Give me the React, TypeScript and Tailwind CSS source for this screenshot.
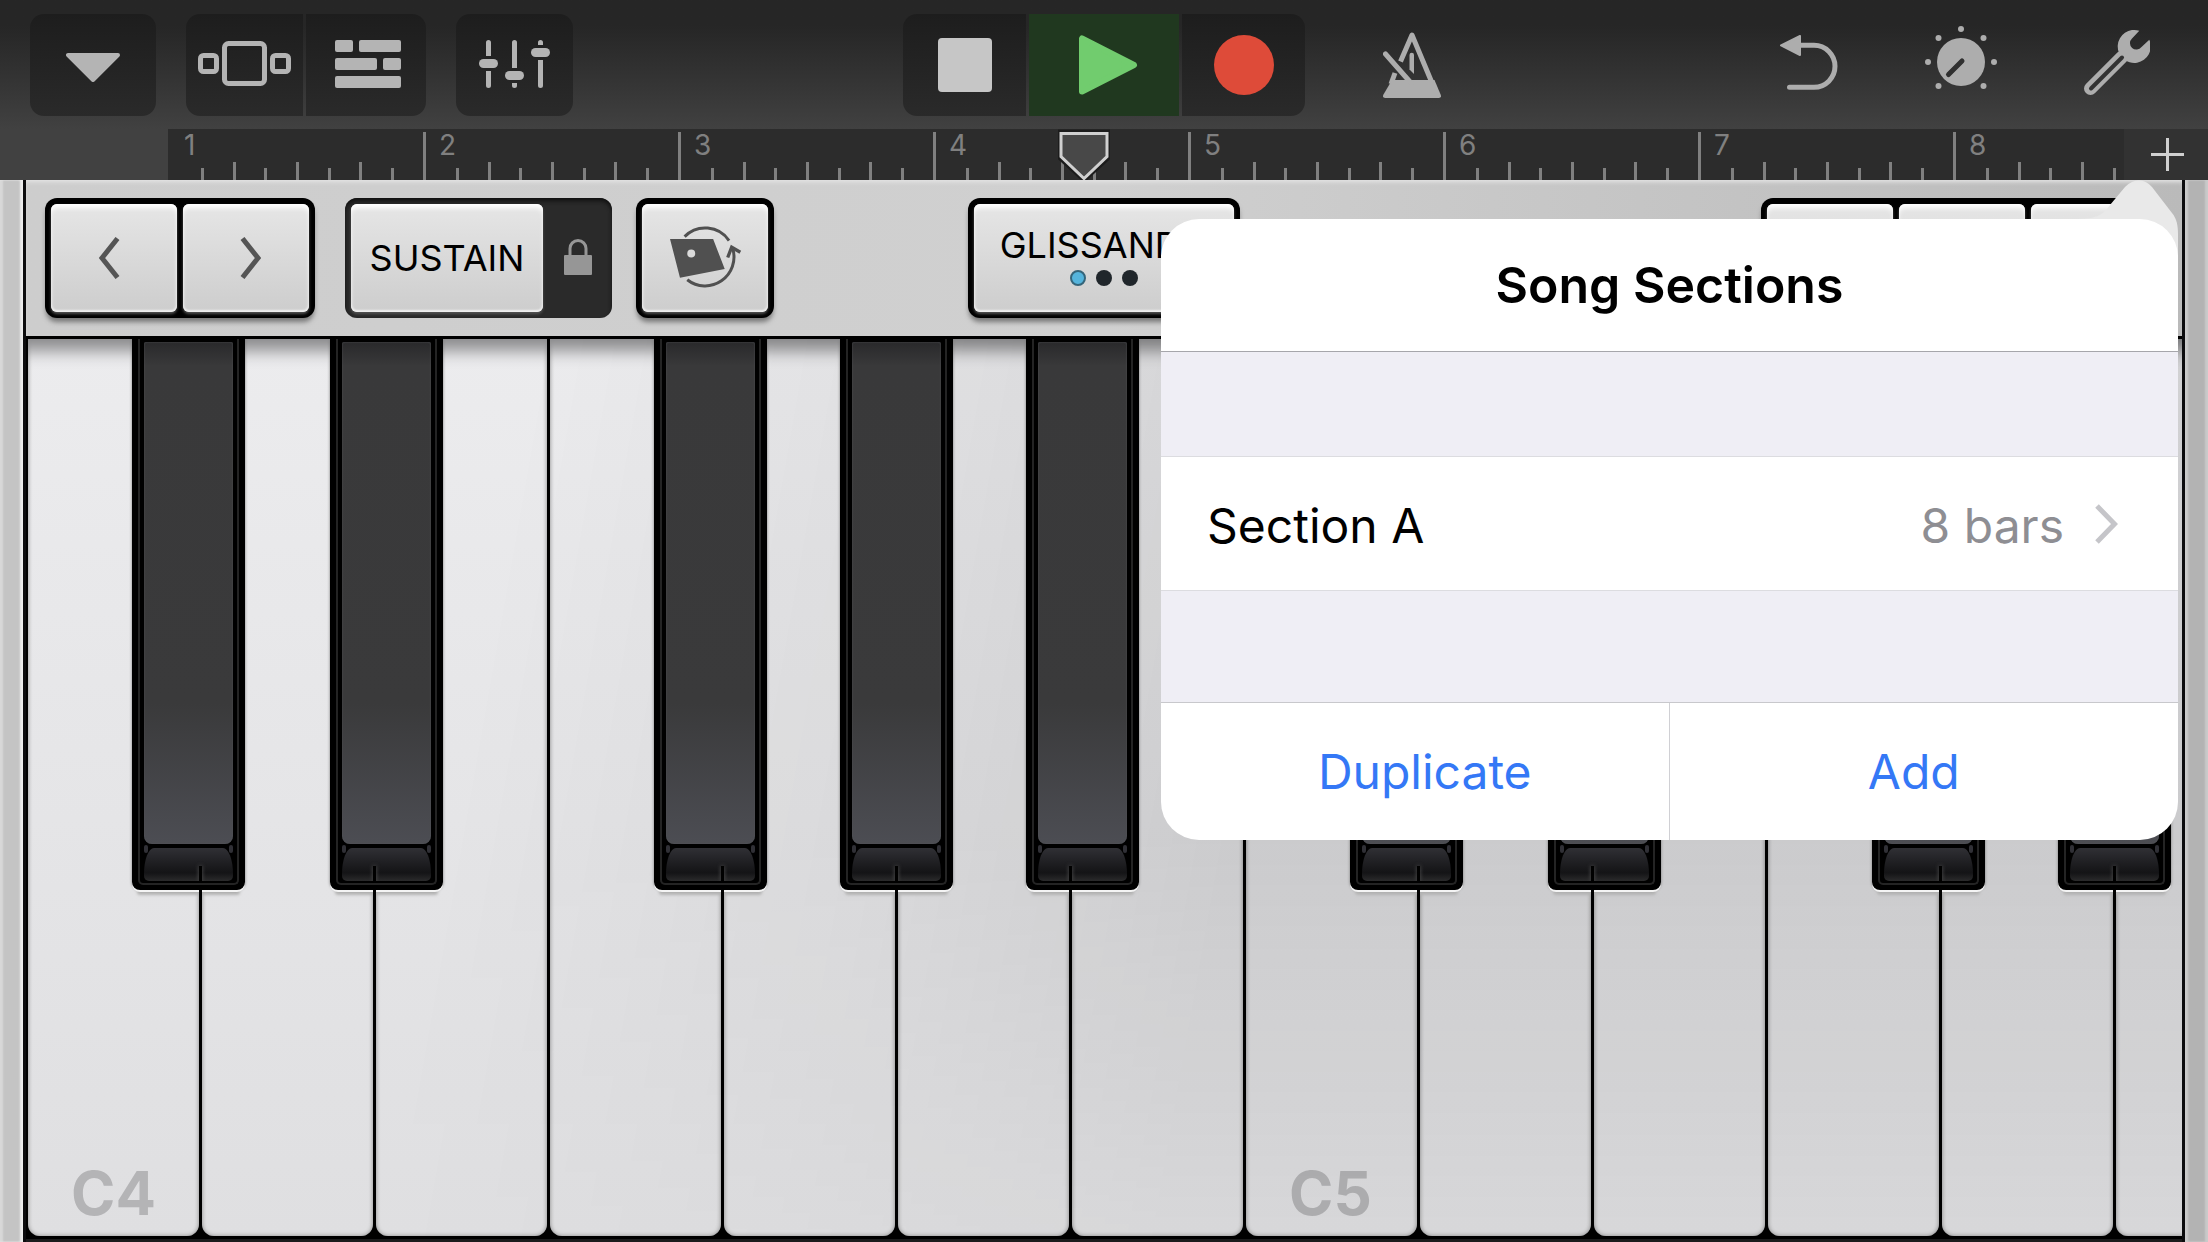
import React from 'react';

type SharpPlace = 'near' | 'mid' | 'far';

interface PianoKey {
  note: string;
  label?: string;
  sharp?: SharpPlace;
}

// One entry per white key; "sharp" says how far the black key hangs over its right edge
const KEYS: PianoKey[] = [
  { note: 'C4', label: 'C4', sharp: 'near' },
  { note: 'D4', sharp: 'far' },
  { note: 'E4' },
  { note: 'F4', sharp: 'near' },
  { note: 'G4', sharp: 'mid' },
  { note: 'A4', sharp: 'far' },
  { note: 'B4' },
  { note: 'C5', label: 'C5', sharp: 'near' },
  { note: 'D5', sharp: 'far' },
  { note: 'E5' },
  { note: 'F5', sharp: 'near' },
  { note: 'G5', sharp: 'mid' },
  { note: 'A5' },
];

const SHARP_LEFT = {
  near: 'left-[104px]',
  mid: 'left-[116px]',
  far: 'left-[128px]',
};

const SEAM_LEFT = {
  near: 'left-[67px]',
  mid: 'left-[55px]',
  far: 'left-[43px]',
};

const BARS = [1, 2, 3, 4, 5, 6, 7, 8];
const TICKS = [12, 18, 12, 18, 12, 18, 12];

const TOOL = 'flex h-[102px] items-center justify-center bg-gradient-to-b from-[#1d1d1d] to-[#2a2a2a]';
const CAP =
  'flex h-[108px] items-center justify-center rounded-[6px] bg-gradient-to-b from-[#e6e6e6] to-[#cdcdcd] shadow-[inset_0_5px_5px_-1px_#ffffff,inset_0_-2px_2px_#f0f0f0,0_2px_3px_#555555]';
const FRAME = 'flex rounded-[12px] bg-black p-[6px] gap-[6px] shadow-[0_5px_5px_-1px_#777777]';

const TracksIcon = () => (
  <svg width="93" height="45" viewBox="0 0 93 45" fill="none" stroke="#b4b4b4" strokeWidth="5">
    <rect x="26.5" y="2.5" width="40" height="40" rx="4" />
    <rect x="2.5" y="14.5" width="16" height="16" rx="3" />
    <rect x="74.5" y="14.5" width="16" height="16" rx="3" />
  </svg>
);

const BricksIcon = () => (
  <svg width="66" height="48" viewBox="0 0 66 48" fill="#b4b4b4">
    <rect width="18" height="12" rx="2" />
    <rect x="24" width="42" height="12" rx="2" />
    <rect y="18" width="42" height="12" rx="2" />
    <rect x="48" y="18" width="18" height="12" rx="2" />
    <rect y="36" width="66" height="12" rx="2" />
  </svg>
);

const MixerIcon = () => (
  <svg width="71" height="48" viewBox="0 0 71 48" fill="#b4b4b4">
    <path d="M7 2.5a2.5 2.5 0 0 1 5 0V16H7zM7 31h5v14.5a2.5 2.5 0 0 1-5 0z" />
    <rect y="19" width="19" height="9" rx="4.5" />
    <path d="M33 2.5a2.5 2.5 0 0 1 5 0V28h-5zM33 43h5v2.5a2.5 2.5 0 0 1-5 0z" />
    <rect x="26" y="31" width="19" height="9" rx="4.5" />
    <path d="M59 2.5a2.5 2.5 0 0 1 5 0V5h-5zM59 20h5v25.5a2.5 2.5 0 0 1-5 0z" />
    <rect x="52" y="8" width="19" height="9" rx="4.5" />
  </svg>
);

const MetronomeIcon = () => (
  <svg width="58" height="66" viewBox="0 0 58 66" fill="none" stroke="#adadad" strokeWidth="5">
    <path d="M17.5 29.5L29 3l23 55" strokeLinejoin="round" />
    <path d="M12 41l-4 11" />
    <path d="M9 48h42.5l6.3 15q.8 3-2 3H2.2q-2.8 0-2-3z" fill="#adadad" stroke="none" />
    <path d="M2.5 22L28 51" strokeLinecap="round" />
    <path d="M26.5 23a2.2 2.2 0 0 1 4.5 0V42l-4.5-4.5z" fill="#adadad" stroke="none" />
  </svg>
);

const UndoIcon = () => (
  <svg width="58" height="55" viewBox="0 0 58 55" fill="none" stroke="#adadad" strokeWidth="5">
    <path d="M20 10.3H34a21 21 0 0 1 0 42H9.5" strokeLinecap="round" />
    <path d="M1 10.3L20 1V20z" fill="#adadad" strokeWidth="2" strokeLinejoin="round" />
  </svg>
);

const KnobIcon = () => (
  <svg width="72" height="72" viewBox="0 0 72 72" fill="#adadad">
    <circle cx="36" cy="36" r="24" />
    <circle cx="3" cy="36" r="3" />
    <circle cx="69" cy="36" r="3" />
    <circle cx="36" cy="3" r="3" />
    <circle cx="13.5" cy="12" r="3" />
    <circle cx="58.5" cy="12" r="3" />
    <circle cx="13.5" cy="60" r="3" />
    <circle cx="58.5" cy="60" r="3" />
    <path d="M37 35L23.5 48.5" stroke="#303030" strokeWidth="5" strokeLinecap="round" />
  </svg>
);

const WrenchIcon = () => (
  <svg width="66" height="66" viewBox="0 0 66 66">
    <path d="M38 28L6.5 59.5" stroke="#adadad" strokeWidth="13" strokeLinecap="round" />
    <path d="M55.3 1.7A16.5 16.5 0 1 0 65.3 10.7L57.5 18A6.4 6.4 0 1 1 48 9.5z" fill="#adadad" />
    <path d="M38 28.5L7 59.5" stroke="#333333" strokeWidth="4" strokeLinecap="round" />
  </svg>
);

const RotateIcon = () => (
  <svg width="73" height="63" viewBox="90 105 220 190" fill="none" stroke="#505050" strokeWidth="9">
    <path d="M137 140A87 87 0 0 1 271 152" />
    <path d="M145 270A87 87 0 0 0 282 176" />
    <path d="M267 203L279 172L305 187" strokeWidth="10" />
    <path
      d="M93 147H223L258 238L123 264zM169 191a12 12 0 1 0-24 0a12 12 0 1 0 24 0"
      fill="#505050"
      fillRule="evenodd"
      stroke="none"
    />
  </svg>
);

const LockIcon = () => (
  <svg width="28" height="38" viewBox="0 0 28 38">
    <path d="M6 20V11.5a8 8 0 0 1 16 0V20" fill="none" stroke="#969696" strokeWidth="3" />
    <rect y="18" width="28" height="20" rx="1" fill="#969696" />
  </svg>
);

const Toolbar: React.FC = () => (
  <header className="grid h-[129px] grid-cols-[1fr_auto_1fr] bg-gradient-to-b from-[#262626] from-20% to-[#414141] pt-[14px]">
    <div className="flex gap-[30px] pl-[30px]">
      <button aria-label="Instruments" className={`${TOOL} w-[126px] rounded-[14px] pt-1`}>
        <svg width="54" height="30" viewBox="0 0 54 30" fill="#b4b4b4" stroke="#b4b4b4" strokeWidth="4" strokeLinejoin="round">
          <path d="M2 3H52L27 28z" />
        </svg>
      </button>
      <div className="flex gap-[3px]">
        <button aria-label="Instrument view" className={`${TOOL} w-[117px] rounded-l-[14px] pb-1`}>
          <TracksIcon />
        </button>
        <button aria-label="Tracks view" className={`${TOOL} w-[120px] rounded-r-[14px] pb-[2px] pl-1`}>
          <BricksIcon />
        </button>
      </div>
      <button aria-label="Track controls" className={`${TOOL} w-[117px] rounded-[14px] pb-[2px]`}>
        <MixerIcon />
      </button>
    </div>

    <div className="flex gap-[3px]">
      <button aria-label="Stop" className={`${TOOL} w-[123px] rounded-l-[14px]`}>
        <span className="size-[54px] rounded-[4px] bg-[#c6c6c6]" />
      </button>
      <button aria-label="Play" className="flex h-[102px] w-[150px] items-center justify-center bg-[#20381f] pl-2">
        <svg width="60" height="60" viewBox="0 0 60 60" fill="#71cc6e" stroke="#71cc6e" strokeWidth="6" strokeLinejoin="round">
          <path d="M4 3.5V56.5L56 30z" />
        </svg>
      </button>
      <button aria-label="Record" className={`${TOOL} w-[123px] rounded-r-[14px]`}>
        <span className="size-[60px] rounded-full bg-[#de4b39]" />
      </button>
    </div>

    <div className="flex h-[102px] items-center pr-[58px] pl-[78px]">
      <button aria-label="Metronome">
        <MetronomeIcon />
      </button>
      <div className="mb-[6px] ml-auto flex items-center gap-[87px]">
        <button aria-label="Undo">
          <UndoIcon />
        </button>
        <button aria-label="Effects">
          <KnobIcon />
        </button>
        <button aria-label="Settings">
          <WrenchIcon />
        </button>
      </div>
    </div>
  </header>
);

const Ruler: React.FC = () => (
  <div className="flex h-[51px] bg-[#414141] pl-[168px]">
    <div className="relative flex flex-1 overflow-hidden bg-[#2c2c2c] pt-[3px]">
      {BARS.map((bar) => (
        <div
          key={bar}
          className={`flex w-[255px] shrink-0 flex-col justify-between border-l-[3px] ${bar === 1 ? 'border-transparent' : 'border-[#808080]'}`}
        >
          <span className="pl-[13px] text-[28px] leading-[26px] text-[#808080]">{bar}</span>
          <div className="flex items-end justify-between pr-[29px] pl-[30px]">
            {TICKS.map((h, i) => (
              <span key={i} className={`w-[3px] bg-[#808080] ${h === 18 ? 'h-[18px]' : 'h-[12px]'}`} />
            ))}
          </div>
        </div>
      ))}
      <svg className="absolute bottom-0 left-[890px]" width="52" height="51" viewBox="0 0 52 51">
        <path d="M2 3.5H50V28L26 50L2 28z" fill="#484848" stroke="#1c1c1c" strokeWidth="6" />
        <path d="M3 4.5H49V27.5L26 49.5L3 27.5z" fill="#484848" stroke="#d0d0d0" strokeWidth="3" />
      </svg>
    </div>
    <button aria-label="Add section" className="flex w-[84px] items-center justify-center bg-[#323232] pl-[2px]">
      <svg width="33" height="33" viewBox="0 0 33 33" stroke="#d0d0d0" strokeWidth="3">
        <path d="M16.5 0V33M0 16.5H33" />
      </svg>
    </button>
  </div>
);

const ControlStrip: React.FC = () => (
  <div className="grid h-[156px] grid-cols-[1fr_auto_1fr] bg-linear-to-r from-[#cdcdcd] via-[#d0d0d0] to-[#bababa] px-[19px] pt-[18px] shadow-[inset_0_4px_4px_-2px_#e4e4e4]">
    <div className="flex items-start">
      <div className={FRAME}>
        <button aria-label="Octave down" className={`${CAP} w-[126px] pr-[10px]`}>
          <svg width="22" height="42" viewBox="0 0 22 42" fill="none" stroke="#555555" strokeWidth="5">
            <path d="M19.5 1.5L4 21L19.5 40.5" />
          </svg>
        </button>
        <button aria-label="Octave up" className={`${CAP} w-[126px] pl-[10px]`}>
          <svg width="22" height="42" viewBox="0 0 22 42" fill="none" stroke="#555555" strokeWidth="5">
            <path d="M2.5 1.5L18 21L2.5 40.5" />
          </svg>
        </button>
      </div>
      <div className="ml-[30px] flex rounded-[12px] bg-[#2a2a2a] py-[6px] pl-[6px] shadow-[inset_0_3px_4px_#111111]">
        <button className={`${CAP} w-[192px] text-[36px] text-black`}>SUSTAIN</button>
        <button aria-label="Lock sustain" className="flex w-[69px] items-center justify-center pb-1">
          <LockIcon />
        </button>
      </div>
      <div className={`${FRAME} ml-[24px]`}>
        <button aria-label="Rotate keyboard" className={`${CAP} w-[126px] pb-1`}>
          <RotateIcon />
        </button>
      </div>
    </div>

    <div className="flex items-start">
      <div className={FRAME}>
        <button className={`${CAP} w-[260px] flex-col gap-[4px] from-[#dcdcdc] to-[#bababa] pb-[2px] text-[36px] leading-[42px] text-black`}>
          GLISSANDO
          <span className="flex gap-[10px] pb-1">
            <span className="size-4 rounded-full border-2 border-[#35657a] bg-[#55b4dc]" />
            <span className="size-4 rounded-full bg-[#20262b]" />
            <span className="size-4 rounded-full bg-[#20262b]" />
          </span>
        </button>
      </div>
    </div>

    <div className="flex items-start justify-end">
      <div className={FRAME}>
        <button aria-label="Keyboard layout" className={`${CAP} w-[126px]`} />
        <button aria-label="Scale" className={`${CAP} w-[126px]`} />
        <button aria-label="Arpeggiator" className={`${CAP} w-[126px]`} />
      </div>
    </div>
  </div>
);

const BlackKey: React.FC<{ place: SharpPlace; note: string }> = ({ place, note }) => (
  <button
    aria-label={`${note} sharp`}
    className={`absolute top-0 z-10 h-[551px] w-[113px] rounded-b-[8px] bg-black px-[6px] pb-[5px] shadow-[0_2px_0_#f4f4f4,0_0_3px_#777777,0_10px_3px_-5px_#b4b4b4] ${SHARP_LEFT[place]}`}
  >
    <span className="flex h-full flex-col gap-[4px] rounded-b-[5px] border-x-2 border-b-2 border-[#242424] bg-black px-[4px] pt-[3px] pb-[2px]">
      <span className="flex-1 rounded-t-[2px] rounded-b-[8px] bg-[linear-gradient(#29292b,#39393a_24px,#3a3a3b_72%,#4c4d53)] shadow-[inset_0_0_2px_#55565a]" />
      <span className="relative h-[33px]">
        <span className="absolute -top-[3px] left-0 h-[8px] w-[4px] rounded-full bg-[#303036]" />
        <span className="absolute -top-[3px] right-0 h-[8px] w-[4px] rounded-full bg-[#303036]" />
        <span className="relative block h-full overflow-hidden bg-linear-to-b from-[#303035] via-[#141416] via-75% to-[#2b2b2c] [border-radius:10px_10px_5px_5px/26px_26px_5px_5px]">
          <span className={`absolute bottom-0 -ml-[12px] h-[15px] w-[3px] bg-black shadow-[0_0_4px_#5a5a5a] ${SEAM_LEFT[place]}`} />
        </span>
      </span>
    </span>
    {/* keeps the gap between the white keys open below the black one */}
    <span className={`absolute top-full h-4 w-[3px] bg-black ${SEAM_LEFT[place]}`} />
  </button>
);

const Keyboard: React.FC = () => (
  <div className="relative flex flex-1 gap-[3px] overflow-hidden border-t-[3px] border-b-[3px] border-t-black border-b-[#1b1b1c] bg-black pb-[3px] pl-[2px]">
    {KEYS.map((key) => (
      <div key={key.note} className="relative flex w-[171px] shrink-0">
        <button
          aria-label={key.note}
          className="flex flex-1 items-end justify-start rounded-b-[12px] bg-linear-to-b from-[#ececee] to-[#dfdfe1] pb-2 pl-[43px] text-[60px] leading-[70px] font-bold text-[#b4b4b6] shadow-[inset_0_26px_16px_-14px_#8e8e90,inset_0_0_4px_#8a8a8a]"
        >
          {key.label}
        </button>
        {key.sharp && <BlackKey place={key.sharp} note={key.note} />}
      </div>
    ))}
    {/* soft shade falling across the right half of the keys */}
    <div className="pointer-events-none absolute inset-0 z-[5] bg-[linear-gradient(100deg,transparent_22%,rgba(0,0,0,0.05)_40%,rgba(0,0,0,0.11)_56%)] [mask-image:linear-gradient(black_55%,rgba(0,0,0,0.3))]" />
  </div>
);

const SongSections: React.FC = () => (
  <section
    aria-label="Song Sections"
    className="absolute top-[39px] right-[30px] z-30 w-[1017px] rounded-[38px]"
  >
    <svg className="absolute -top-[39px] right-0 -z-10" width="110" height="100" viewBox="0 0 110 100">
      <path
        d="M6 39C28 39 34 36 42 25L57 7C66-2 76-2 84 7L104 33C109 39 110 46 110 54V100H6z"
        fill="#e9e9e9"
      />
    </svg>
    <div className="overflow-hidden rounded-[38px] bg-white">
      <h2 className="border-b border-[#a6a6ab] py-9 text-center text-[50px] leading-[60px] font-semibold text-black">
        Song Sections
      </h2>
      <div className="h-[104px] bg-[#efeef5]" />
      <button className="flex h-[135px] w-full items-center border-y border-[#dcdce0] bg-white pr-[60px] pl-[46px] text-[48px]">
        <span className="pt-1 text-black">Section A</span>
        <span className="ml-auto pt-1 text-[#8e8e93]">8 bars</span>
        <svg className="ml-[30px]" width="24" height="40" viewBox="0 0 24 40" fill="none" stroke="#c5c5c9" strokeWidth="5">
          <path d="M3 2L20.5 20L3 38" />
        </svg>
      </button>
      <div className="h-[111px] bg-[#efeef5]" />
      <div className="grid h-[138px] grid-cols-2 border-t border-[#c8c8cc] text-[48px] text-[#3478f6]">
        <button className="border-r border-[#d0d0d4] pl-[20px]">Duplicate</button>
        <button className="pr-[20px]">Add</button>
      </div>
    </div>
  </section>
);

const RAIL = 'w-[23px] shrink-0';

export default function App() {
  return (
    <div className="flex min-h-screen flex-col overflow-hidden bg-black font-['Inter',sans-serif]">
      <Toolbar />
      <Ruler />
      <main className="relative flex flex-1">
        <div className={`${RAIL} bg-[#c4c4c4] shadow-[inset_-3px_0_2px_#ededed,inset_3px_0_2px_#d8d8d8]`} />
        <div className="flex min-w-0 flex-1 flex-col border-x-[3px] border-[#0c0c0e]">
          <ControlStrip />
          <Keyboard />
        </div>
        <div className={`${RAIL} bg-[#b3b3b3] shadow-[inset_-3px_0_2px_#cacaca,inset_3px_0_2px_#cccccc]`} />
        <SongSections />
      </main>
    </div>
  );
}
